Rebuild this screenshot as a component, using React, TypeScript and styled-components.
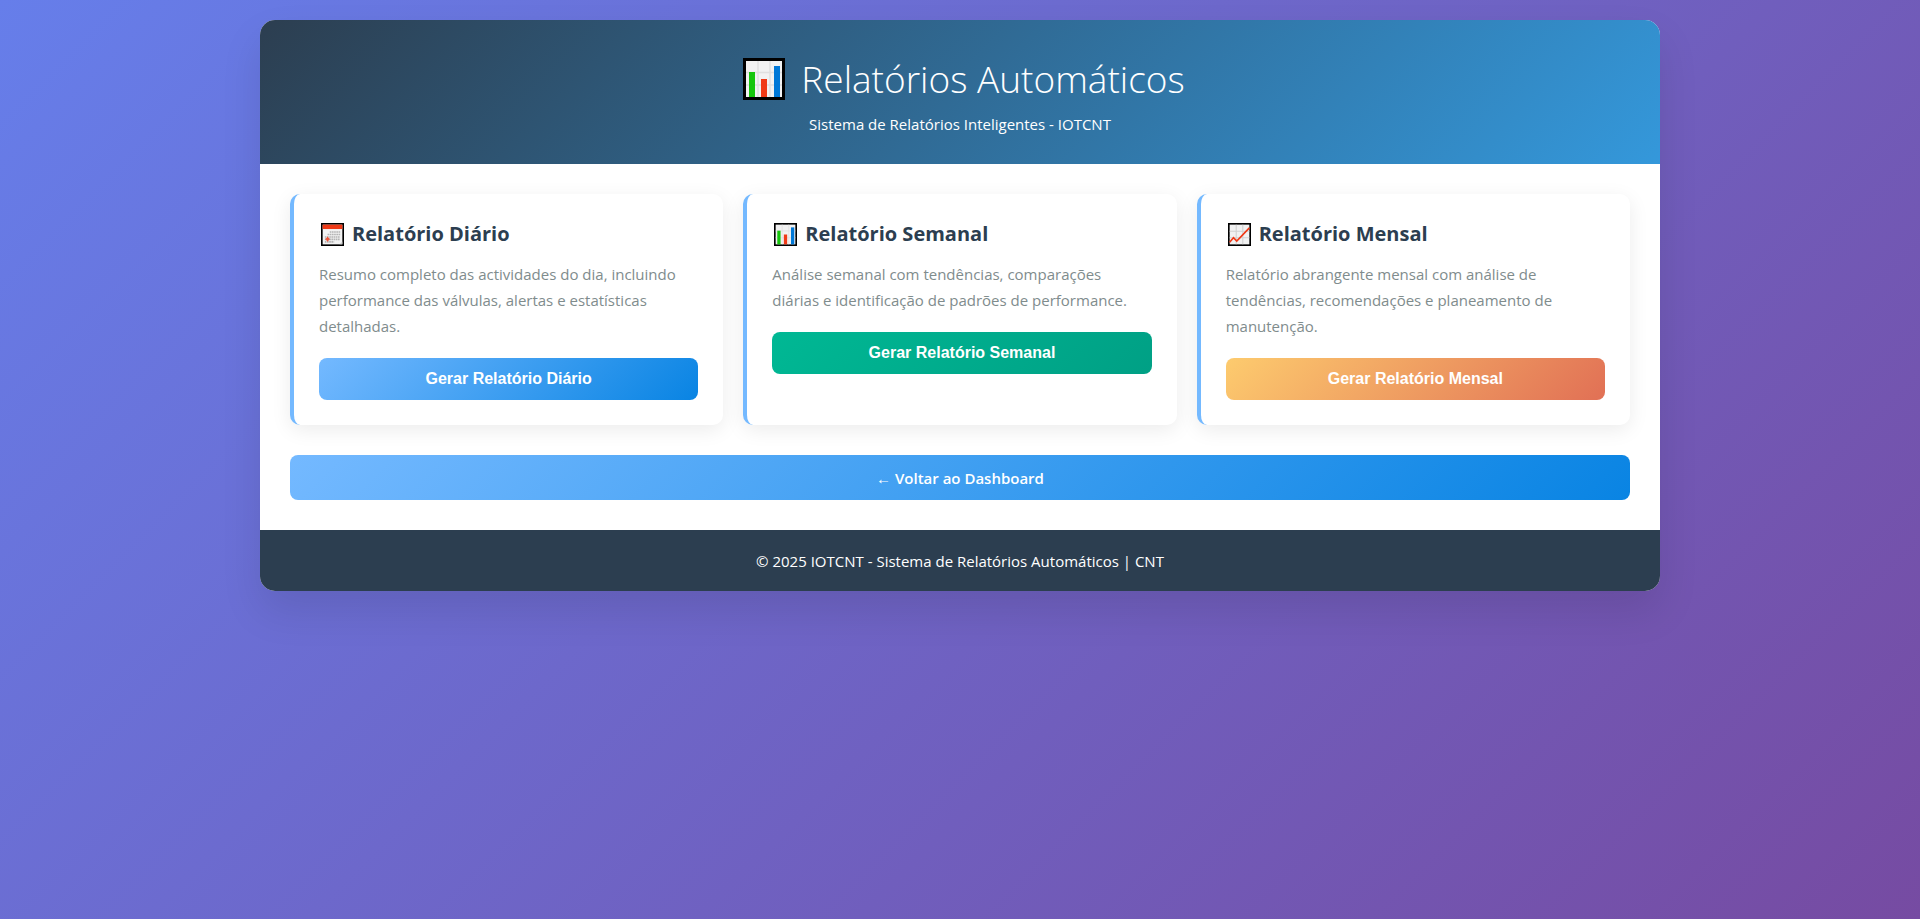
import React from "react";
import styled, { createGlobalStyle } from "styled-components";

const GlobalStyle = createGlobalStyle`
  *, *::before, *::after {
    box-sizing: border-box;
    margin: 0;
    padding: 0;
  }

  html {
    min-height: 100%;
  }

  body {
    min-height: 100vh;
    padding: 20px;
    font-family: "Segoe UI", "Open Sans", "Noto Sans", sans-serif;
    font-size: 15px;
    line-height: 21px;
    background: linear-gradient(135deg, #667eea 0%, #764ba2 100%);
  }
`;

const gradients = {
  blue: "linear-gradient(135deg, #74b9ff, #0984e3)",
  green: "linear-gradient(135deg, #00b894, #00a085)",
  orange: "linear-gradient(135deg, #fdcb6e, #e17055)",
};

type Tone = keyof typeof gradients;

const Container = styled.div`
  max-width: 1400px;
  margin: 0 auto;
  overflow: hidden;
  background: #fff;
  border-radius: 15px;
  box-shadow: 0 20px 40px rgba(0, 0, 0, 0.1);
`;

const Header = styled.header`
  padding: 32px 30px 29px;
  color: #fff;
  text-align: center;
  background: linear-gradient(135deg, #2c3e50 0%, #3498db 100%);
`;

const PageTitle = styled.h1`
  display: flex;
  align-items: center;
  justify-content: center;
  gap: 16px;
  margin-bottom: 9px;
  padding-left: 8px;
  font-size: 37px;
  font-weight: 300;
  line-height: 53px;
`;

const Content = styled.main`
  padding: 30px;
`;

const CardGrid = styled.div`
  display: grid;
  grid-template-columns: repeat(auto-fit, minmax(350px, 1fr));
  gap: 20px;
  margin-bottom: 30px;
`;

const Card = styled.section`
  padding: 25px;
  background: #fff;
  border-left: 4px solid #74b9ff;
  border-radius: 10px;
  box-shadow: 0 5px 20px rgba(0, 0, 0, 0.08);
`;

const CardTitle = styled.h2`
  display: flex;
  align-items: center;
  gap: 8px;
  margin-bottom: 12px;
  padding-left: 2px;
  color: #2c3e50;
  font-size: 20px;
  font-weight: 700;
  line-height: 30px;
`;

const CardText = styled.p`
  margin-bottom: 19px;
  color: #7f8c8d;
  line-height: 26px;
`;

const GenerateButton = styled.button<{ $tone: Tone }>`
  display: block;
  width: 100%;
  padding: 12px 24px;
  border: none;
  border-radius: 8px;
  color: #fff;
  font-family: Arial, "Liberation Sans", sans-serif;
  font-size: 16px;
  font-weight: 600;
  line-height: 18px;
  text-align: center;
  cursor: pointer;
  background: ${({ $tone }) => gradients[$tone]};
`;

const BackLink = styled.a`
  display: block;
  padding: 13px 24px 11px;
  border-radius: 8px;
  color: #fff;
  font-weight: 600;
  text-align: center;
  text-decoration: none;
  background: ${gradients.blue};
`;

const Footer = styled.footer`
  padding: 21px 20px 19px;
  color: #fff;
  text-align: center;
  background: #2c3e50;
`;

const Icon = styled.svg<{ $size: number }>`
  flex: none;
  width: ${({ $size }) => $size}px;
  height: ${({ $size }) => $size}px;
`;

function BarChartIcon({ size }: { size: number }) {
  return (
    <Icon $size={size} viewBox="0 0 42 42" aria-hidden="true">
      <rect width="42" height="42" fill="#000" />
      <rect x="3" y="3" width="36" height="36" fill="#f2f2f2" />
      <path d="M15 3v36M27 3v36M3 14.5h36M3 27h36" stroke="#e0e0e0" strokeWidth="1.5" />
      <rect x="6" y="14" width="6" height="25" fill="#16c60c" />
      <rect x="18" y="21" width="6" height="18" fill="#f03a17" />
      <rect x="31" y="8" width="6" height="31" fill="#0078d7" />
    </Icon>
  );
}

function LineChartIcon({ size }: { size: number }) {
  return (
    <Icon $size={size} viewBox="0 0 42 42" aria-hidden="true">
      <rect width="42" height="42" fill="#000" />
      <rect x="3" y="3" width="36" height="36" fill="#f2f2f2" />
      <path d="M15 3v36M27 3v36M3 15h36M3 27h36" stroke="#d2d2d2" strokeWidth="2" />
      <path d="M3 35l7-8 6 6L39 9" fill="none" stroke="#f03a17" strokeWidth="3" />
    </Icon>
  );
}

function CalendarIcon({ size }: { size: number }) {
  return (
    <Icon $size={size} viewBox="0 0 42 42" aria-hidden="true">
      <rect width="42" height="42" fill="#000" />
      <rect x="3" y="3" width="36" height="36" fill="#f2f2f2" />
      <rect x="3" y="3" width="36" height="8" fill="#f03a17" />
      <path
        d="M16 16.5h19M12 21h23M7 25.500h28M7 30h28M7 34.500h17"
        stroke="#b4b4b4"
        strokeWidth="3"
        strokeDasharray="3 1"
      />
      <path d="M12 25v9M8 29.500h8M10 27l4 5M14 27l-4 5" stroke="#f0563a" strokeWidth="2" />
      <path d="M39 34v5h-5z" fill="#cccccc" />
    </Icon>
  );
}

interface Report {
  title: string;
  text: string;
  action: string;
  tone: Tone;
  icon: React.ComponentType<{ size: number }>;
}

const reports: Report[] = [
  {
    title: "Relatório Diário",
    text: "Resumo completo das actividades do dia, incluindo performance das válvulas, alertas e estatísticas detalhadas.",
    action: "Gerar Relatório Diário",
    tone: "blue",
    icon: CalendarIcon,
  },
  {
    title: "Relatório Semanal",
    text: "Análise semanal com tendências, comparações diárias e identificação de padrões de performance.",
    action: "Gerar Relatório Semanal",
    tone: "green",
    icon: BarChartIcon,
  },
  {
    title: "Relatório Mensal",
    text: "Relatório abrangente mensal com análise de tendências, recomendações e planeamento de manutenção.",
    action: "Gerar Relatório Mensal",
    tone: "orange",
    icon: LineChartIcon,
  },
];

export default function App() {
  return (
    <>
      <GlobalStyle />
      <Container>
        <Header>
          <PageTitle>
            <BarChartIcon size={42} />
            Relatórios Automáticos
          </PageTitle>
          <p>Sistema de Relatórios Inteligentes - IOTCNT</p>
        </Header>
        <Content>
          <CardGrid>
            {reports.map(({ title, text, action, tone, icon: ReportIcon }) => (
              <Card key={title}>
                <CardTitle>
                  <ReportIcon size={23} />
                  {title}
                </CardTitle>
                <CardText>{text}</CardText>
                <GenerateButton type="button" $tone={tone}>
                  {action}
                </GenerateButton>
              </Card>
            ))}
          </CardGrid>
          <BackLink href="#dashboard">← Voltar ao Dashboard</BackLink>
        </Content>
        <Footer>
          <p>© 2025 IOTCNT - Sistema de Relatórios Automáticos | CNT</p>
        </Footer>
      </Container>
    </>
  );
}
